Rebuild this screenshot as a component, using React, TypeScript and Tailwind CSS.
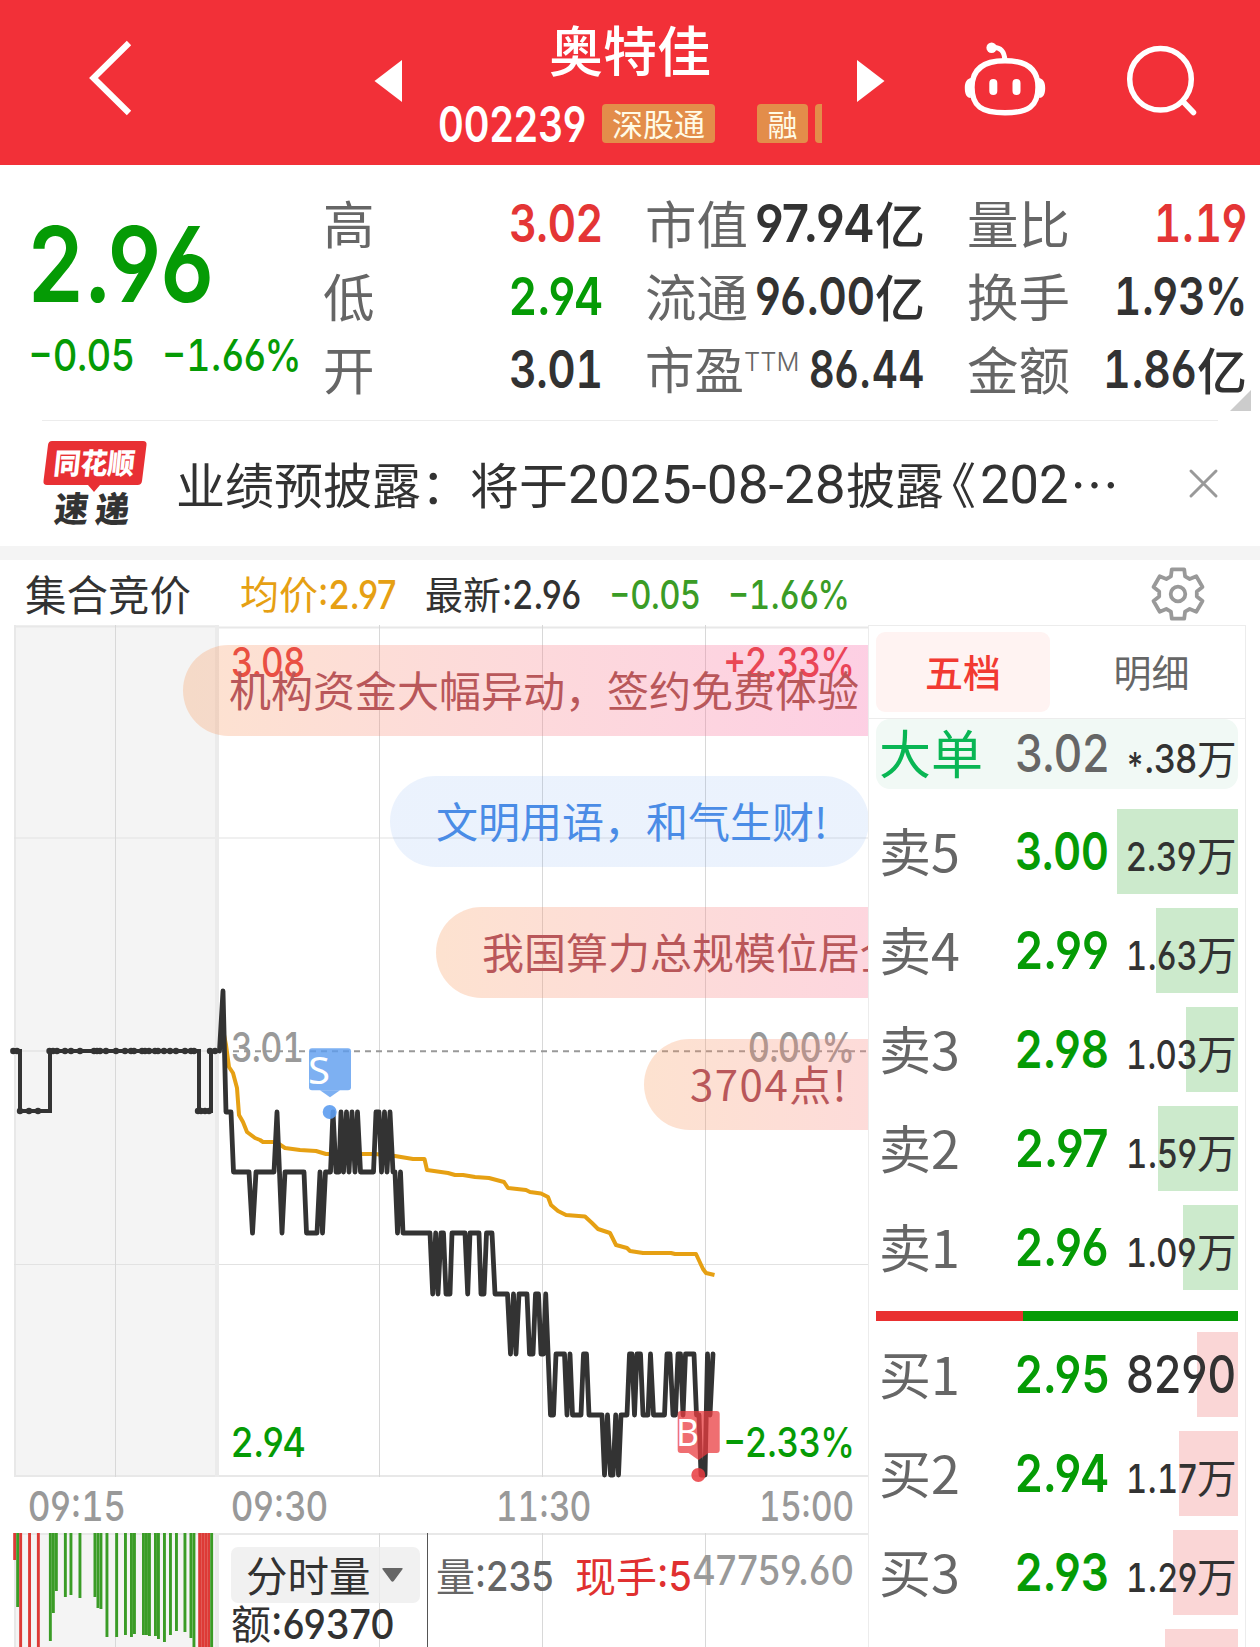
import React, { useLayoutEffect, useRef, useState } from "react";

const CJK = "font-['Noto_Sans_CJK_SC',sans-serif]";
const DIGITS = "font-['Inter',sans-serif] [font-feature-settings:'cv03','cv04']";
const TABULAR = "[font-feature-settings:'tnum']";

/** Condenses (or widens) one line of text so that it fills exactly `w` pixels. */
function Fit({ w, className = "", children }: { w: number; className?: string; children: React.ReactNode }) {
  const ref = useRef<HTMLSpanElement>(null);
  const [k, setK] = useState(1);
  useLayoutEffect(() => {
    if (ref.current) setK(w / ref.current.offsetWidth);
  }, [w]);
  return (
    <span className={`block shrink-0 leading-none ${className}`} style={{ width: w }}>
      <span ref={ref} className="inline-block origin-left whitespace-nowrap align-top leading-none" style={{ transform: `scaleX(${k})` }}>
        {children}
      </span>
    </span>
  );
}

/** Digits; "1" takes the full tabular advance, as in a DIN face. */
function Num({ w, className = "", children }: { w: number; className?: string; children: string }) {
  return (
    <Fit w={w} className={`${DIGITS} ${className}`}>
      {children.split(/(−?1|\*)/).map((part, i) => {
        if (part.endsWith("1")) return <span key={i} className={TABULAR}>{part}</span>;
        if (part === "*") return <span key={i} className="inline-block translate-y-[0.17em] scale-90">*</span>;
        return part;
      })}
    </Fit>
  );
}

function Cn({ className = "", children }: { className?: string; children: React.ReactNode }) {
  return <span className={`block shrink-0 -translate-y-[0.047em] whitespace-nowrap leading-none ${CJK} ${className}`}>{children}</span>;
}

function Header() {
  return (
    <header className="flex h-[165px] bg-[#f23038]">
      <svg className="mt-[38px] ml-[85px] h-20 w-[50px] shrink-0" viewBox="85 38 50 80" fill="none" stroke="#fff" strokeWidth="6.200">
        <path d="M129 43 93.500 78l35.500 35" />
      </svg>
      <svg className="mt-[60px] ml-[239px] h-[42px] w-7 shrink-0" viewBox="0 0 28 42" fill="#fff">
        <path d="M28 0v42L.5 21z" />
      </svg>
      <div className="ml-4 w-[404px] shrink-0 overflow-hidden">
        <Cn className="mt-[25px] ml-[131px] text-[54px] font-medium text-white">奥特佳</Cn>
        <div className="mt-[25px] flex h-[39px] items-center pl-5">
          <Num w={148} className="mt-px text-[49px] font-semibold text-white">002239</Num>
          <div className="ml-[16px] flex h-[39px] w-[113px] shrink-0 items-center justify-center rounded-[4px] bg-[#e38d4a]">
            <Cn className="text-[31px] text-[#fffbe6]">深股通</Cn>
          </div>
          <div className="ml-[42px] flex h-[39px] w-[51px] shrink-0 items-center justify-center rounded-[4px] bg-[#e38d4a]">
            <Cn className="text-[30px] text-[#fffbe6]">融</Cn>
          </div>
          <div className="ml-[7px] h-[39px] w-5 shrink-0 rounded-[4px] bg-[#e38d4a]" />
        </div>
      </div>
      <svg className="mt-[60px] ml-[35px] h-[42px] w-7 shrink-0" viewBox="0 0 28 42" fill="#fff">
        <path d="M0 0v42l27.500-21z" />
      </svg>
      <svg className="mt-[38px] ml-[77px] h-[82px] w-[86px] shrink-0" viewBox="962 38 86 82" fill="none" stroke="#fff">
        <path strokeWidth="5.400" d="M1005 60.700c21.500 0 33 8.500 33 26.500 0 19-9.500 25.600-33 25.600s-33-6.600-33-25.600c0-18 11.500-26.500 33-26.500z" />
        <path strokeWidth="5" d="M993 47.500c7.500-.5 11.500 4 11.800 12.500" />
        <circle cx="991.600" cy="47.700" r="5.200" fill="#fff" stroke="none" />
        <path fill="#fff" stroke="none" d="M971.500 78c-4.500.5-6.700 4-6.700 10s1.700 9.700 6 10zM1038.500 78c4.500.5 6.700 4 6.700 10s-1.700 9.700-6 10z" />
        <path strokeWidth="8" strokeLinecap="round" d="M993.300 83v8M1016.500 83v8" />
      </svg>
      <svg className="mt-[42px] ml-[76px] h-[76px] w-[76px] shrink-0" viewBox="1124 42 76 76" fill="none" stroke="#fff" strokeWidth="5.500">
        <circle cx="1160.500" cy="79.300" r="30.800" />
        <path strokeLinecap="round" d="M1183 101.500l10.500 11" />
      </svg>
    </header>
  );
}

type Stat = { label: string; sup?: string; n: string; w: number; unit?: string; tone: string };
const columns: Stat[][] = [
  [
    { label: "高", n: "3.02", w: 94, tone: "text-[#e43535]" },
    { label: "低", n: "2.94", w: 94, tone: "text-[#059b05]" },
    { label: "开", n: "3.01", w: 94, tone: "text-[#323232]" },
  ],
  [
    { label: "市值", n: "97.94", w: 120, unit: "亿", tone: "text-[#323232]" },
    { label: "流通", n: "96.00", w: 120, unit: "亿", tone: "text-[#323232]" },
    { label: "市盈", sup: "TTM", n: "86.44", w: 116, tone: "text-[#323232]" },
  ],
  [
    { label: "量比", n: "1.19", w: 93, tone: "text-[#e43535]" },
    { label: "换手", n: "1.93%", w: 133, tone: "text-[#323232]" },
    { label: "金额", n: "1.86", w: 94, unit: "亿", tone: "text-[#323232]" },
  ],
];

function Quote() {
  return (
    <section className="relative flex h-[255px]">
      <div className="w-[323px] shrink-0 pl-[28px]">
        <Num w={186} className="mt-[47px] text-[104px] font-semibold text-[#059b05]">2.96</Num>
        <div className="mt-[17px] flex">
          <Num w={106} className="text-[44px] font-[550] text-[#059b05]">−0.05</Num>
          <Num w={140} className="ml-[28px] text-[44px] font-[550] text-[#059b05]">−1.66%</Num>
        </div>
      </div>
      <div className="mt-[22px] flex gap-[42px]">
        {columns.map((col, i) => (
          <div key={i} className="w-[280px]">
            {col.map((s) => (
              <div key={s.label} className="flex h-[73px] items-center">
                <Cn className={s.sup ? "text-[49.500px] text-[#666]" : "text-[51.500px] text-[#666]"}>{s.label}</Cn>
                {s.sup && <Num w={55} className="mb-[16px] text-[26px] font-light text-[#666]">{s.sup}</Num>}
                <span className="flex-1" />
                <Num w={s.w} className={`mt-px text-[52px] font-[580] ${s.tone}`}>{s.n}</Num>
                {s.unit && <Cn className={`text-[50px] font-medium ${s.tone}`}>{s.unit}</Cn>}
              </div>
            ))}
          </div>
        ))}
      </div>
      <svg className="absolute top-[225px] left-[1230px] h-[21px] w-[21px]" viewBox="0 0 21 21" fill="#ccc">
        <path d="M21 0v21H0z" />
      </svg>
    </section>
  );
}

function Notice() {
  return (
    <section className="mx-[42px] flex h-[126px] items-center border-t border-[#ececec]">
      <div className="relative h-[90px] w-[106px] shrink-0">
        <svg className="absolute inset-0 h-full w-full" viewBox="42 438 106 90" fill="#e83034">
          <path d="M52 440h91q4 0 3.500 4l-4.500 36q-.5 4-4.500 4h-37.500l-6 7-6-7H47q-4 0-3.500-4l4.500-36q.5-4 4-4z" />
        </svg>
        <div className="relative flex flex-col">
          <span className="mt-[8px] ml-[12px] flex -skew-x-6">
            <Fit w={81} className={`text-[29px] font-black text-white ${CJK}`}>同花顺</Fit>
          </span>
          <span className="mt-[13px] ml-[13px] flex -skew-x-6 gap-[7px]">
            <Fit w={34} className={`text-[35px] font-black text-[#333] ${CJK}`}>速</Fit>
            <Fit w={34} className={`text-[35px] font-black text-[#333] ${CJK}`}>递</Fit>
          </span>
        </div>
      </div>
      <div className="mt-[1px] ml-[28px] flex h-[49px] w-[940px] shrink-0 items-center text-[#323232]">
        <Cn className="text-[49px]">业绩预披露：将于</Cn>
        <Fit w={278} className="mt-[2px] font-['Roboto',sans-serif] text-[53px]">2025-08-28</Fit>
        <Cn className="text-[49px]">披露</Cn>
        <Cn className="-ml-[17px] text-[49px]">《</Cn>
        <Fit w={88} className="mt-[2px] ml-[4px] font-['Roboto',sans-serif] text-[53px]">202</Fit>
        <Cn className="ml-[2px] text-[49px]">⋯</Cn>
      </div>
      <svg className="ml-[72px] h-[31px] w-[31px] shrink-0" viewBox="0 0 31 31" fill="none" stroke="#999" strokeWidth="3" strokeLinecap="round">
        <path d="M3 3l25 25M28 3 3 28" />
      </svg>
    </section>
  );
}

function gearPath() {
  const pts: string[] = [];
  for (let i = 0; i < 6; i++) {
    const a = -90 + i * 60;
    for (const [d, r] of [[-22, 19], [-14, 25.5], [14, 25.5], [22, 19]]) {
      const t = ((a + d) * Math.PI) / 180;
      pts.push(`${(r * Math.cos(t)).toFixed(1)} ${(r * Math.sin(t)).toFixed(1)}`);
    }
  }
  return `M${pts.join("L")}Z`;
}

function Toolbar() {
  return (
    <div className="flex h-[65px] items-center">
      <Cn className="ml-[25px] w-[215px] pt-[6px] text-[41.500px] text-[#323232]">集合竞价</Cn>
      <Cn className="pt-[4px] text-[39px] text-[#e6a013]">均价</Cn>
      <Num w={79} className="mt-[3px] text-[39px] font-medium text-[#e6a013]">:2.97</Num>
      <Cn className="ml-[28px] pt-[4px] text-[38px] text-[#323232]">最新</Cn>
      <Num w={79} className="mt-[3px] ml-[1px] text-[39px] font-medium text-[#323232]">:2.96</Num>
      <Num w={91} className="mt-[3px] ml-[28px] text-[39px] font-medium text-[#3a9c26]">−0.05</Num>
      <Num w={122} className="mt-[3px] ml-[28px] text-[39px] font-medium text-[#3a9c26]">−1.66%</Num>
      <svg className="mt-[2px] ml-[299px] h-[58px] w-[58px] shrink-0" viewBox="-29 -29 58 58" fill="none" stroke="#999" strokeWidth="3.800" strokeLinejoin="round">
        <path d={gearPath()} />
        <circle r="7.300" />
      </svg>
    </div>
  );
}

const price =
  "219.5,1051 223,991 226,1112 231,1112 233.5,1172 249,1172 252.5,1233 256,1172 274,1172 277,1112 282,1233 285,1172 304,1172 306.5,1233 317,1233 320,1172 322.5,1233 325.5,1172 330.5,1172 333,1112 336,1172 339,1172 341,1112 343.5,1172 346.5,1112 349,1172 352,1112 355,1172 357.5,1112 360.5,1172 373.5,1172 376,1112 379,1112 381.5,1172 384.5,1112 387,1172 390,1112 393,1172 395,1172 397.5,1233 400.5,1172 403,1233 430,1233 432.7,1294 435.7,1233 438,1294 441,1233 443.5,1233 446,1294 450,1294 452,1233 465,1233 467.7,1294 470,1233 479,1233 481,1294 484,1294 486.5,1233 492,1233 495,1294 507.5,1294 510.5,1354 513.5,1294 516,1354 519,1294 527,1294 529.5,1354 533,1354 535.5,1294 538.5,1294 541,1354 543.5,1354 545.7,1294 550.5,1415 553.5,1415 556,1354 564.5,1354 567,1415 570,1354 572.5,1415 581,1415 583.5,1354 586.5,1354 589,1415 602,1415 604.5,1475 607.5,1415 610.5,1475 613,1475 615.7,1415 618.5,1475 621,1415 627,1415 629.5,1354 632,1354 634.5,1415 637,1354 640.5,1354 643,1415 648,1415 650.5,1354 653.5,1415 664.5,1415 667,1354 670,1354 673,1415 675.5,1415 678,1354 680.5,1354 683,1415 685.5,1354 694,1354 696.5,1415 699,1415 701,1475 705,1475 707.5,1354 710,1415 713,1354";
const average =
  "223,1030 226,1045 229,1067 233,1073 237,1088 239,1115 243,1122 247,1132 255,1138 260,1140 263,1142 276,1142 285,1148 300,1150 316,1151 326,1154 375,1154 395,1156 413,1159 424.5,1159 427,1170 448,1173 455,1175 463,1175 475,1177 489,1178 504,1182 508,1188 526,1190 530,1192 541,1193.5 548,1197 551,1205 558,1211 566,1215 585,1216.5 592,1223 598,1229 610,1233 616,1245 627,1248 630,1251 643,1253 671,1253 675,1254 696,1254 703,1269 706,1273 714.5,1275";
const auction = "13,1051 20,1051 20,1111 50,1111 50,1051 199,1051 199,1111 211,1111 211,1051 217,1051";
const upperDots = [13.3, 17, 49.5, 53, 57, 65, 71, 80, 94, 97, 100, 106, 116, 125, 131, 134, 142, 145, 149, 155, 158, 164, 170, 176, 185, 191, 194, 210, 215];
const lowerDots = [20, 29, 38, 198, 201, 205, 209];

type Label = { t: string; x: number; w: number; y: number; c: string };
const labels: Label[] = [
  { t: "3.08", x: 231, w: 74, y: 677, c: "#e43535" },
  { t: "+2.33%", x: 723, w: 132, y: 677, c: "#e43535" },
  { t: "3.01", x: 231, w: 73, y: 1062, c: "#999" },
  { t: "0.00%", x: 748, w: 107, y: 1062, c: "#999" },
  { t: "2.94", x: 231, w: 75, y: 1457, c: "#059b05" },
  { t: "−2.33%", x: 723, w: 132, y: 1457, c: "#059b05" },
  { t: "09:15", x: 28, w: 97, y: 1521, c: "#999" },
  { t: "09:30", x: 231, w: 97, y: 1521, c: "#999" },
  { t: "11:30", x: 496, w: 95, y: 1521, c: "#999" },
  { t: "15:00", x: 759, w: 95, y: 1521, c: "#999" },
];

const bubbles = [
  { text: "机构资金大幅异动，签约免费体验", box: "top-[20px] left-[183px] w-[760px] from-[#f8975547] to-[#f85fac50] text-[#b9575a]" },
  { text: "文明用语，和气生财!", box: "top-[151px] left-[390px] w-[479px] from-[#5b97f01f] to-[#5b97f01f] text-[#4a8ce6]" },
  { text: "我国算力总规模位居全国第二", box: "top-[282px] left-[436px] w-[700px] from-[#f8975547] to-[#f85fac50] text-[#b9575a]" },
  { text: "3704点!", box: "top-[414px] left-[644px] w-[620px] from-[#f8975547] to-[#f85fac50] text-[#b9575a] tracking-[1.500px]" },
];

function PriceChart() {
  return (
    <div className="relative h-[908px] overflow-hidden">
      <svg className="block h-[908px] w-[868px]" viewBox="0 625 868 908">
        <rect x="14" y="625" width="203" height="852" fill="#f4f4f4" />
        <g stroke="#e8e8e8" strokeWidth="2">
          <path d="M14 626.500h203M217 627.500h651M14 1476h854M15 625v852M14 1051h205" />
          <path strokeWidth="1.200" d="M14 838h854M14 1264.500h854" stroke="#e2e2e2" />
          <path strokeWidth="1" d="M115.500 625v852M379.500 625v852M542.500 625v852M705.500 625v852" stroke="#d8d8d8" />
          <path strokeWidth="4" d="M217 625v852" stroke="#ebebeb" />
        </g>
        <path d="M222 1051.300h646" stroke="#999" strokeWidth="2" strokeDasharray="6 5" />
        <g className={DIGITS} fontSize="41" fontWeight="550">
          {labels.map((l) => (
            <text key={l.t} x={l.x} y={l.y} fill={l.c} textLength={l.w} lengthAdjust="spacingAndGlyphs">
              {l.t.split(/(1)/).map((part, i) => (part === "1" ? <tspan key={i} className={TABULAR}>1</tspan> : part))}
            </text>
          ))}
        </g>
        <polyline points={average} fill="none" stroke="#e6a013" strokeWidth="4" strokeLinejoin="round" />
        <g fill="none" stroke="#333" strokeLinejoin="round" strokeLinecap="round">
          <polyline points={auction} strokeWidth="4" strokeLinejoin="miter" strokeLinecap="butt" />
          <polyline points={price} strokeWidth="4.800" />
        </g>
        <g fill="#333">
          {upperDots.map((x) => <circle key={x} cx={x} cy="1051" r="3.200" />)}
          {lowerDots.map((x) => <circle key={x} cx={x} cy="1111" r="3.200" />)}
        </g>
        <g fontSize="38" className="font-['Noto_Sans',sans-serif]">
          <g fill="#5c9cef" fillOpacity=".8">
            <rect x="309" y="1048.300" width="42" height="42" rx="3" />
            <path d="M320 1090.300h20l-10 7z" />
            <circle cx="329.700" cy="1112" r="7" fillOpacity=".9" />
          </g>
          <text x="308" y="1083.500" fill="#fff" textLength="22" lengthAdjust="spacingAndGlyphs">S</text>
          <g fill="#e93b3f" fillOpacity=".74">
            <rect x="677.700" y="1411" width="42" height="42" rx="3" />
            <path d="M688.500 1453h20l-10 7z" />
            <circle cx="698.300" cy="1475" r="7" fillOpacity=".85" />
          </g>
          <text x="676" y="1446" fill="#fff" textLength="23" lengthAdjust="spacingAndGlyphs">B</text>
        </g>
      </svg>
      {bubbles.map((b) => (
        <div key={b.text} className={`absolute flex h-[91px] items-center rounded-l-full rounded-r-full bg-linear-to-r pl-[46px] ${b.box}`}>
          <Cn className="text-[42px]">{b.text}</Cn>
        </div>
      ))}
    </div>
  );
}

const FULL = 114;
const volume: [number, number, boolean][] = [
  [14.7, 27, true], [17.7, 74, false], [20.7, FULL, true], [29.6, FULL, true], [38.4, FULL, true],
  [50.4, 108, false], [53.4, 80, false], [56.4, 58, false], [65.4, 64, false], [71, 62, false], [80, 65, false],
  [95, 64, false], [98, 75, false], [101, 76, false], [107, 104, false], [116.700, 104, false], [125.500, 102, false],
  [131.500, 104, false], [134.500, 101, false], [143.500, 102, false], [146.500, 102, false], [149.500, 103, false],
  [155.500, 103, false], [158.500, 106, false], [164.500, 109, false], [170.500, 102, false], [176.500, 98, false],
  [185, 99, false], [191, 105, false], [194, FULL, false], [199.700, FULL, true], [202.700, FULL, true], [205.700, FULL, true],
  [208.700, FULL, true], [211.700, FULL, false],
];

function VolumeChart() {
  return (
    <div className="relative h-[114px]">
      <svg className="absolute inset-0 h-[114px] w-[868px]" viewBox="0 1533 868 114">
        <rect x="14" y="1533" width="203" height="114" fill="#f4f4f4" />
        <path d="M14 1534h854M15 1533v114" stroke="#e8e8e8" strokeWidth="2" />
        <path d="M115.500 1533v114M379.500 1533v114M542.500 1533v114M705.500 1533v114" stroke="#d8d8d8" />
        <path d="M217 1533v114" stroke="#ebebeb" strokeWidth="4" />
        <path d="M427.500 1533v114" stroke="#555" />
        {volume.map(([x, h, up]) => (
          <rect key={x} x={x - 1.5} y="1533" width="2.900" height={h} fill={up ? "#dd3a36" : "#3a9c26"} />
        ))}
      </svg>
      <div className="relative flex h-[114px] pl-[231px]">
        <div className="w-[205px] shrink-0 pt-[14px]">
          <div className="flex h-[56px] w-[189px] items-center rounded-[7px] bg-[#ededed]/80 pl-[15px]">
            <Cn className="pt-[4px] text-[41.500px] text-[#323232]">分时量</Cn>
            <svg className="ml-[11px] h-[14px] w-[21px]" viewBox="0 0 21 14" fill="#666">
              <path d="M1.500 0h18q2 0 .8 1.500l-8.500 11.500q-1.300 1.500-2.600 0L.7 1.500Q-.5 0 1.500 0z" />
            </svg>
          </div>
          <div className="mt-[1px] flex h-10 items-center text-[#323232]">
            <Cn className="text-[40px]">额</Cn>
            <Num w={124} className="text-[41px] font-medium">:69370</Num>
          </div>
        </div>
        <div className="mt-[23px] flex h-10 items-center">
          <Cn className="text-[39px] text-[#666]">量</Cn>
          <Num w={79} className="text-[41px] font-medium text-[#666]">:235</Num>
          <Cn className="ml-[21px] text-[41px] text-[#e03030]">现手</Cn>
          <Num w={35} className="text-[41px] font-medium text-[#e03030]">:5</Num>
          <Num w={162} className="mb-[12px] text-[41px] font-medium text-[#999]">47759.60</Num>
        </div>
      </div>
    </div>
  );
}

type Order = { label: string; p: string; q: string; bar: string };
const asks: Order[] = [
  { label: "卖5", p: "3.00", q: "2.39", bar: "w-[121px]" },
  { label: "卖4", p: "2.99", q: "1.63", bar: "w-[82px]" },
  { label: "卖3", p: "2.98", q: "1.03", bar: "w-[52px]" },
  { label: "卖2", p: "2.97", q: "1.59", bar: "w-[80px]" },
  { label: "卖1", p: "2.96", q: "1.09", bar: "w-[55px]" },
];
const bids: Order[] = [
  { label: "买1", p: "2.95", q: "8290", bar: "w-[41px]" },
  { label: "买2", p: "2.94", q: "1.17", bar: "w-[59px]" },
  { label: "买3", p: "2.93", q: "1.29", bar: "w-[65px]" },
  { label: "", p: "", q: "", bar: "w-[73px]" },
];

function OrderRow({ o, tint }: { o: Order; tint: string }) {
  const whole = !o.q.includes(".");
  return (
    <div className="relative mb-[14px] h-[85px] shrink-0">
      <div className={`absolute inset-y-0 right-0 ${o.bar} ${tint}`} />
      {o.label && (
        <div className="relative flex h-[85px] items-center pl-[3px]">
          <Cn className="w-[136px] text-[52px] text-[#666]">{o.label}</Cn>
          <Num w={94} className="mt-px text-[52px] font-semibold text-[#059b05]">{o.p}</Num>
          {whole ? (
            <Num w={110} className="mt-px ml-[17px] text-[52px] font-[550] text-[#323232]">{o.q}</Num>
          ) : (
            <>
              <Num w={71} className="mt-[10px] ml-[17px] text-[40px] font-medium text-[#323232]">{o.q}</Num>
              <Cn className="mt-[9px] text-[39.500px] text-[#323232]">万</Cn>
            </>
          )}
        </div>
      )}
    </div>
  );
}

function OrderBook() {
  return (
    <aside className="flex h-[1022px] w-[378px] shrink-0 flex-col overflow-hidden border border-b-0 border-[#ececec]">
      <div className="flex h-[93px] shrink-0 items-center border-b border-[#ececec] px-[7px]">
        <div className="flex h-20 w-[174px] items-center justify-center rounded-[9px] bg-[#fff3f2]">
          <Cn className="pt-[2px] text-[38px] font-medium text-[#f23a32]">五档</Cn>
        </div>
        <div className="flex flex-1 items-center justify-center pl-[15px]">
          <Cn className="pt-[2px] text-[38px] text-[#666]">明细</Cn>
        </div>
      </div>
      <div className="mx-[7px] flex h-[70px] shrink-0 items-center rounded-[14px] bg-[#f1f9f5] pl-[3px]">
        <Cn className="w-[136px] text-[52px] text-[#09b654]">大单</Cn>
        <Num w={94} className="text-[52px] font-medium text-[#666]">3.02</Num>
        <Num w={71} className="mt-[9px] ml-[17px] text-[40px] font-medium text-[#323232]">*.38</Num>
        <Cn className="mt-[9px] text-[39.500px] text-[#323232]">万</Cn>
      </div>
      <div className="mx-[7px] mt-5">
        {asks.map((o) => <OrderRow key={o.label} o={o} tint="bg-[#cceacc]" />)}
      </div>
      <div className="mx-[7px] mt-[7px] mb-[11px] flex h-[10px] shrink-0">
        <div className="w-[147px] bg-[#e93030]" />
        <div className="flex-1 bg-[#059b05]" />
      </div>
      <div className="mx-[7px]">
        {bids.map((o, i) => <OrderRow key={i} o={o} tint="bg-[#fad6d6]" />)}
      </div>
    </aside>
  );
}

export default function App() {
  return (
    <main className="h-[1647px] w-[1260px] overflow-hidden bg-white">
      <Header />
      <Quote />
      <Notice />
      <div className="h-[14px] bg-[#f4f4f4]" />
      <Toolbar />
      <div className="flex">
        <div className="w-[868px] shrink-0">
          <PriceChart />
          <VolumeChart />
        </div>
        <OrderBook />
      </div>
    </main>
  );
}
